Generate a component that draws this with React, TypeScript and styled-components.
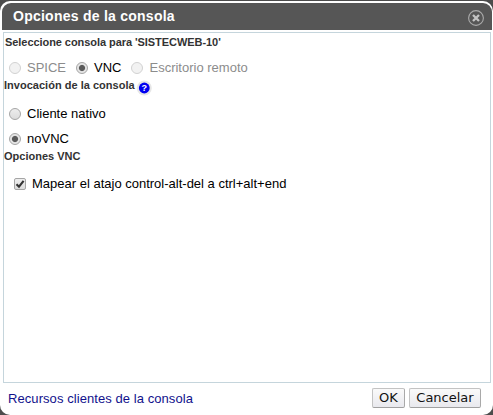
import React from "react";
import styled, { createGlobalStyle } from "styled-components";

const GlobalStyle = createGlobalStyle`
  html, body { margin: 0; height: 100%; overflow: hidden; background: #4c4c4c; }
  #root { height: 100%; }
  * { box-sizing: border-box; }
`;

const Dialog = styled.section`
  display: flex;
  flex-direction: column;
  height: 414px;
  margin-top: 1px;
  padding: 2px 1px 0 2px;
  background: #fff;
  border-radius: 10px;
  font: 13px/16px "Liberation Sans", Arial, sans-serif;
  color: #000;
`;

const Header = styled.header`
  display: flex;
  align-items: center;
  justify-content: space-between;
  flex: none;
  height: 27px;
  padding: 0 7px 0 11px;
  background: #565656;
  border-radius: 9px 9px 0 0;
`;

const Title = styled.h1`
  margin: 0 0 1px;
  font: bold 14px/18px "Liberation Sans", Arial, sans-serif;
  letter-spacing: 0.25px;
  color: #fff;
`;

const CloseButton = styled.button`
  display: block;
  width: 18px;
  height: 18px;
  margin-top: 3px;
  padding: 0;
  border: 0;
  background: none;
  svg { display: block; }
`;

const Panel = styled.div`
  flex: none;
  height: 351px;
  margin: 2px 1px 0 1px;
  border: 1px solid #c5d5dc;
`;

const Heading = styled.h2<{ $height?: number; $indent?: number; $tracking?: number }>`
  display: flex;
  align-items: center;
  height: ${(p) => p.$height ?? 18}px;
  margin: 0;
  padding-left: ${(p) => p.$indent ?? 0}px;
  font: bold 11px/12px "Liberation Sans", Arial, sans-serif;
  letter-spacing: ${(p) => p.$tracking ?? 0}px;
  color: #333;
  white-space: nowrap;
`;

const Row = styled.div<{ $height: number; $left?: number }>`
  display: flex;
  align-items: center;
  height: ${(p) => p.$height}px;
  padding-left: ${(p) => p.$left ?? 5}px;
`;

const RadioRow = styled(Row)`
  padding-top: 7px;
`;

const Option = styled.label<{ $muted?: boolean; $gap?: number }>`
  display: flex;
  align-items: center;
  gap: 6px;
  margin-right: ${(p) => p.$gap ?? 0}px;
  color: ${(p) => (p.$muted ? "#8c8c8c" : "#000")};
  white-space: nowrap;
`;

const RadioDot = styled.span<{ $on?: boolean; $muted?: boolean }>`
  width: 12px;
  height: 12px;
  border: 1px solid ${(p) => (p.$muted ? "#d2d2d2" : "#a5a5a5")};
  border-radius: 50%;
  background: ${(p) =>
    p.$on
      ? "radial-gradient(circle, #5a5a5a 0 2.6px, #e5e5e5 3.6px)"
      : p.$muted
        ? "#f2f2f2"
        : "linear-gradient(#ededed, #dcdcdc)"};
`;

const CheckBox = styled.span`
  width: 12px;
  height: 12px;
  border: 1px solid #a5a5a5;
  border-radius: 2px;
  background: linear-gradient(#eee, #dcdcdc);
  svg { display: block; margin: -1px; }
`;

const Help = styled.span`
  display: block;
  flex: none;
  width: 16px;
  height: 16px;
  margin: 5px 0 0 1px;
  svg { display: block; }
`;

const HelpMark = styled.text`
  font: bold 9px "Liberation Sans", Arial, sans-serif;
  fill: #fff;
`;

const Footer = styled.footer`
  display: flex;
  flex: none;
  height: 31px;
  padding: 5px 11px 0 6px;
  gap: 4px;
`;

const Link = styled.a`
  margin-right: auto;
  line-height: 21px;
  letter-spacing: 0.07px;
  color: #11118c;
`;

const Button = styled.button<{ $width: number }>`
  width: ${(p) => p.$width}px;
  height: 20px;
  padding: 0 0 1px;
  border: 1px solid #c3c3c3;
  border-right-color: #a9a9a9;
  border-bottom-color: #a0a0a0;
  border-radius: 2px;
  background: linear-gradient(#fafafa, #e9e9ee);
  font: 13px/17px "DejaVu Sans", sans-serif;
  color: #111;
`;

function Radio({ label, on, muted, gap }: { label: string; on?: boolean; muted?: boolean; gap?: number }) {
  return (
    <Option $muted={muted} $gap={gap}>
      <RadioDot $on={on} $muted={muted} />
      {label}
    </Option>
  );
}

export default function App() {
  return (
    <>
      <GlobalStyle />
      <Dialog>
        <Header>
          <Title>Opciones de la consola</Title>
          <CloseButton aria-label="Cerrar">
            <svg width="18" height="18" viewBox="0 0 18 18">
              <circle cx="9" cy="9" r="7.4" fill="none" stroke="#aaa" strokeWidth="1.1" />
              <path d="M6 6l6 6M12 6l-6 6" stroke="#c4c4c4" strokeWidth="2.3" />
            </svg>
          </CloseButton>
        </Header>
        <Panel>
          <Heading $indent={1} $tracking={-0.06}>Seleccione consola para 'SISTECWEB-10'</Heading>
          <RadioRow $height={26}>
            <Radio label="SPICE" muted gap={10} />
            <Radio label="VNC" on gap={10} />
            <Radio label="Escritorio remoto" muted />
          </RadioRow>
          <Heading $height={16} $tracking={0.02}>
            Invocación de la consola
            <Help>
              <svg width="16" height="16" viewBox="0 0 16 16">
                <circle cx="8.3" cy="8" r="7.5" fill="#e6e6e6" />
                <circle cx="8.3" cy="8" r="5.4" fill="#0000f0" />
                <HelpMark x="8.3" y="11.2" textAnchor="middle">?</HelpMark>
              </svg>
            </Help>
          </Heading>
          <RadioRow $height={34}>
            <Radio label="Cliente nativo" />
          </RadioRow>
          <Row $height={24}>
            <Radio label="noVNC" on />
          </Row>
          <Heading $height={10}>Opciones VNC</Heading>
          <Row $height={45} $left={10}>
            <Option>
              <CheckBox>
                <svg width="12" height="12" viewBox="0 0 12 12">
                  <path d="M2.5 6.2L5 8.7 9.6 2.8" fill="none" stroke="#333" strokeWidth="2.1" />
                </svg>
              </CheckBox>
              Mapear el atajo control-alt-del a ctrl+alt+end
            </Option>
          </Row>
        </Panel>
        <Footer>
          <Link>Recursos clientes de la consola</Link>
          <Button $width={33}>OK</Button>
          <Button $width={72}>Cancelar</Button>
        </Footer>
      </Dialog>
    </>
  );
}
